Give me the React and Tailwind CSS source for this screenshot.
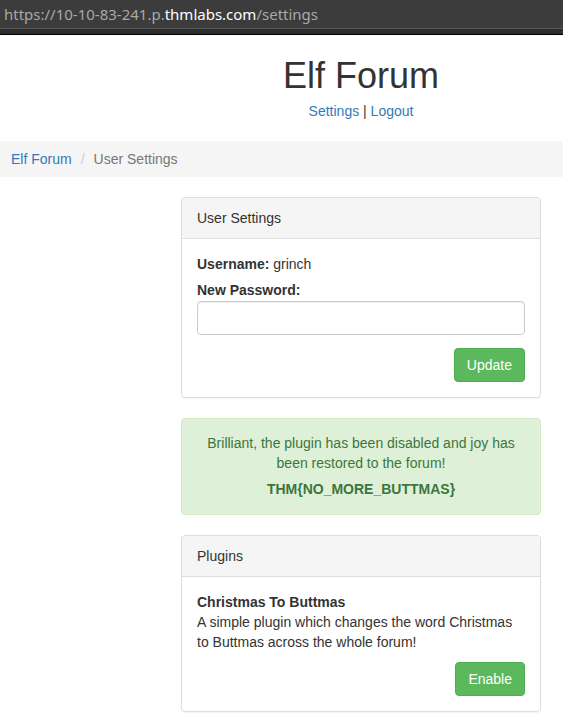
export default function App() {
  return (
    <div className="min-h-[726px] bg-white text-[14px] leading-[20px] text-[#333]" style={{ fontFamily: '"Liberation Sans", Arial, sans-serif' }}>
      {/* browser address bar */}
      <div className="h-[35px] bg-[#2e2e2e] border-b border-black">
        <div className="h-[29px] bg-[#3c3c3c] border-b border-[#555] flex items-center pl-[4px] text-[15px] text-[#a8a8a8]" style={{ fontFamily: '"Noto Sans", "Open Sans", sans-serif' }}>
          <span>https://10-10-83-241.p.</span>
          <span className="text-white">thmlabs.com</span>
          <span>/settings</span>
        </div>
      </div>

      {/* header */}
      <div className="ml-[181px] w-[360px] text-center">
        <h1 className="mt-[21px] text-[36px] leading-[40px] font-normal">Elf Forum</h1>
        <div className="mt-[5px]">
          <a href="#" className="text-[#337ab7]">Settings</a> | <a href="#" className="text-[#337ab7]">Logout</a>
        </div>
      </div>

      {/* breadcrumb */}
      <div className="mt-[20px] bg-[#f5f5f5] px-[11px] py-[8px] flex">
        <a href="#" className="text-[#337ab7]">Elf Forum</a>
        <span className="px-[9px] text-[#ccc]">/</span>
        <span className="text-[#777]">User Settings</span>
      </div>

      <div className="ml-[181px] w-[360px] pt-[20px] flex flex-col">
        {/* user settings panel */}
        <div className="border border-[#ddd] rounded-[4px] shadow-[0_1px_1px_rgba(0,0,0,0.05)]">
          <div className="bg-[#f5f5f5] border-b border-[#ddd] px-[15px] py-[10px] rounded-t-[3px]">User Settings</div>
          <div className="p-[15px]">
            <p className="mb-[6px]"><b>Username:</b> grinch</p>
            <label className="block font-bold mb-[1px]">New Password:</label>
            <input type="password" className="block w-full h-[34px] border border-[#ccc] rounded-[4px] px-[12px] shadow-[inset_0_1px_1px_rgba(0,0,0,0.075)] outline-none" />
            <div className="mt-[13px] flex justify-end">
              <button className="h-[34px] px-[12px] bg-[#5cb85c] border border-[#4cae4c] rounded-[4px] text-white">Update</button>
            </div>
          </div>
        </div>

        {/* alert */}
        <div className="mt-[20px] bg-[#dff0d8] border border-[#d6e9c6] rounded-[4px] text-[#3c763d] text-center px-[15px] pt-[14px] pb-[15px]">
          <p>Brilliant, the plugin has been disabled and joy has been restored to the forum!</p>
          <p className="mt-[6px] font-bold">THM{'{'}NO_MORE_BUTTMAS{'}'}</p>
        </div>

        {/* plugins panel */}
        <div className="mt-[20px] border border-[#ddd] rounded-[4px] shadow-[0_1px_1px_rgba(0,0,0,0.05)]">
          <div className="bg-[#f5f5f5] border-b border-[#ddd] px-[15px] py-[10px] rounded-t-[3px]">Plugins</div>
          <div className="p-[15px]">
            <p className="font-bold">Christmas To Buttmas</p>
            <p>A simple plugin which changes the word Christmas to Buttmas across the whole forum!</p>
            <div className="mt-[10px] flex justify-end">
              <button className="h-[34px] px-[12px] bg-[#5cb85c] border border-[#4cae4c] rounded-[4px] text-white">Enable</button>
            </div>
          </div>
        </div>
      </div>
    </div>
  );
}
